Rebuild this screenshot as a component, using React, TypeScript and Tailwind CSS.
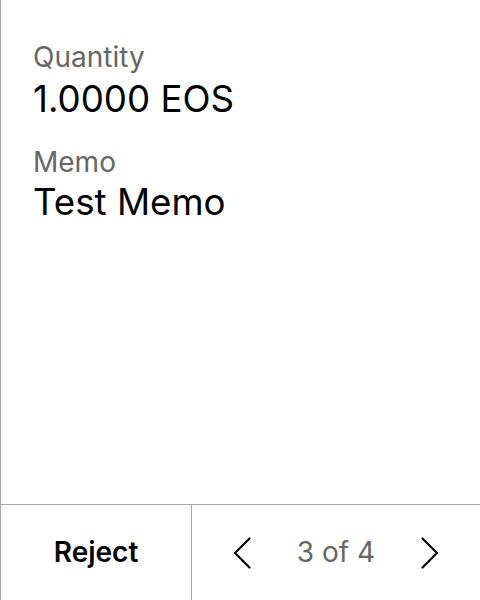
import React from "react";

export default function App() {
  return (
    <div
      className="w-[480px] h-[600px] flex flex-col bg-white border-l border-[#a6a6a6] text-black"
      style={{ fontFamily: "Inter, 'Noto Sans', sans-serif" }}
    >
      <div className="flex-1 flex flex-col pl-[32px] pt-[40px]">
        <div className="text-[28px] leading-[34px] text-[#666666]">Quantity</div>
        <div className="text-[36.7px] leading-[44px] mt-[3px]">1.0000 EOS</div>
        <div className="text-[28px] leading-[34px] text-[#666666] mt-[24px]">Memo</div>
        <div className="text-[36.7px] leading-[44px] mt-[1px]">Test Memo</div>
      </div>
      <div className="h-[96px] flex border-t border-[#a6a6a6]">
        <div className="w-[191px] flex items-center justify-center border-r border-[#a6a6a6] text-[28px] font-semibold pb-[2px]">
          Reject
        </div>
        <div className="flex-1 flex items-center justify-between pl-[41px] pr-[41px]">
          <svg width="18" height="32" viewBox="0 0 18 32" fill="none" stroke="#000" strokeWidth="2.2" strokeLinecap="round" strokeLinejoin="round">
            <path d="M16.5 1.5 L2 16 L16.5 30.5" />
          </svg>
          <span className="text-[28px] text-[#666666] pb-[2px]">3 of 4</span>
          <svg width="18" height="32" viewBox="0 0 18 32" fill="none" stroke="#000" strokeWidth="2.2" strokeLinecap="round" strokeLinejoin="round">
            <path d="M1.5 1.5 L16 16 L1.5 30.5" />
          </svg>
        </div>
      </div>
    </div>
  );
}
